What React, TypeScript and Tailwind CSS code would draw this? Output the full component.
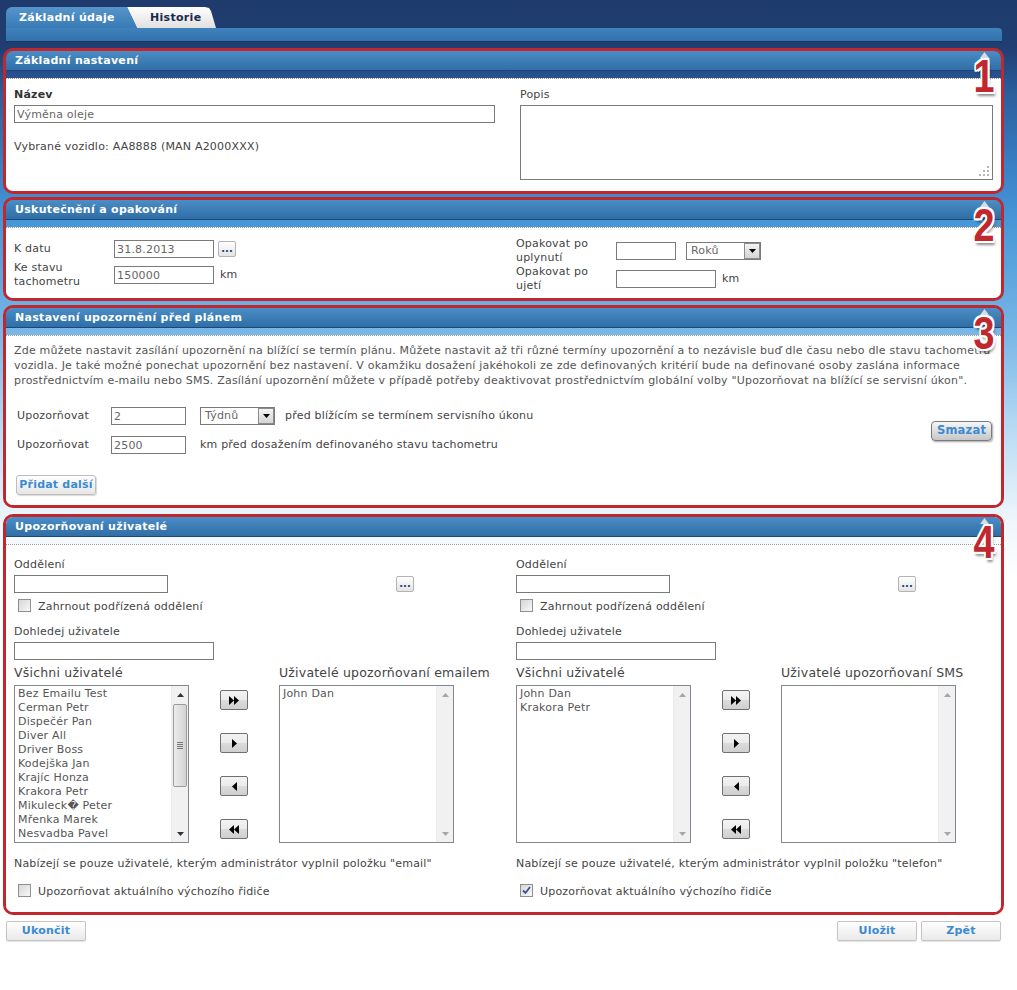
import React from "react";

type Dir = "up" | "down" | "left" | "right";

function Tri({ dir, color = "#000", big = false }: { dir: Dir; color?: string; big?: boolean }) {
  if (dir === "right")
    return big ? (
      <svg width="5" height="9" viewBox="0 0 5 9">
        <path d="M0 0L5 4.5L0 9z" fill={color} />
      </svg>
    ) : (
      <svg width="4" height="7" viewBox="0 0 4 7">
        <path d="M0 0L4 3.5L0 7z" fill={color} />
      </svg>
    );
  if (dir === "left")
    return big ? (
      <svg width="5" height="9" viewBox="0 0 5 9">
        <path d="M5 0L0 4.5L5 9z" fill={color} />
      </svg>
    ) : (
      <svg width="4" height="7" viewBox="0 0 4 7">
        <path d="M4 0L0 3.5L4 7z" fill={color} />
      </svg>
    );
  if (dir === "down")
    return (
      <svg width="7" height="4" viewBox="0 0 7 4">
        <path d="M0 0H7L3.5 4z" fill={color} />
      </svg>
    );
  return (
    <svg width="7" height="4" viewBox="0 0 7 4">
      <path d="M0 4H7L3.5 0z" fill={color} />
    </svg>
  );
}

function Input({ className = "", value = "" }: { className?: string; value?: string }) {
  return (
    <input
      readOnly
      value={value}
      className={`h-[18px] border border-[#7a7a7a] bg-white pl-[2px] text-[11px] text-[#666] outline-none ${className}`}
    />
  );
}

function Select({ value, className = "" }: { value: string; className?: string }) {
  return (
    <div className={`relative flex h-[18px] items-center border border-[#7a7a7a] bg-white pl-[4px] text-[#666] ${className}`}>
      {value}
      <div className="absolute right-0 top-0 flex h-[16px] w-[16px] items-center justify-center border border-[#8c8c8c] bg-[linear-gradient(#f4f4f4,#d4d4d4)]">
        <Tri dir="down" />
      </div>
    </div>
  );
}

function DotsBtn({ className = "" }: { className?: string }) {
  return (
    <div className={`flex h-[16px] w-[18px] items-end justify-center rounded-[2px] border border-[#b3b3b3] bg-[linear-gradient(#ffffff,#e4e4e4)] pb-[3px] text-[10px] font-bold leading-[8px] tracking-normal text-[#1b3f80] ${className}`}>
      ...
    </div>
  );
}

function Btn({ children, className = "" }: { children: React.ReactNode; className?: string }) {
  return (
    <div className={`flex h-[20px] w-[80px] items-center justify-center rounded-[2px] border border-[#c4c4c4] bg-[linear-gradient(#ffffff,#e9e9e9)] text-[11px] font-bold text-[#3b8ad2] shadow-[0_1px_1px_rgba(0,0,0,0.12)] ${className}`}>
      {children}
    </div>
  );
}

function Checkbox({ checked = false }: { checked?: boolean }) {
  return (
    <div className="relative h-[13px] w-[13px] shrink-0 border border-[#8e8f8f] bg-[linear-gradient(135deg,#d6d6d6,#f8f8f8)]">
      {checked && (
        <svg className="absolute left-[1px] top-[1px]" width="9" height="9" viewBox="0 0 9 9">
          <path d="M1 4.5L3.5 7L8 1" stroke="#3b4f93" strokeWidth="1.8" fill="none" />
        </svg>
      )}
    </div>
  );
}

function Section({
  title,
  num,
  className,
  children,
}: {
  title: string;
  num: string;
  className: string;
  children: React.ReactNode;
}) {
  return (
    <div className={`relative flex w-[1001px] flex-col rounded-[10px] border-[3px] border-[#c1282e] ${className}`}>
      <div className="h-[20px] shrink-0 rounded-t-[7px] border-b border-[#1d4776] bg-[linear-gradient(#4b8dc6,#2f6ea7)] pl-[9px] text-[11px] font-bold leading-[19px] tracking-[0.3px] text-white">
        {title}
      </div>
      <div className="h-[7px] shrink-0" />
      <div className="flex-1 rounded-b-[7px] border-t border-dotted border-[#9a9a9a] bg-white">{children}</div>
      <div className="absolute right-[12px] top-[1px]">
        <svg width="9" height="6" viewBox="0 0 9 6">
          <path d="M0 6H9L4.5 0z" fill="#d9dde3" />
        </svg>
      </div>
      <div className="absolute right-[6px] top-[2px] origin-right scale-x-[0.82] font-['Liberation_Sans',sans-serif] text-[46px] font-bold leading-none tracking-normal text-[#c1282e] [text-shadow:-2px_0_0_#fff,2px_0_0_#fff,0_-2px_0_#fff,0_2px_0_#fff,-2px_-2px_0_#fff,2px_-2px_0_#fff,-2px_2px_0_#fff,2px_2px_0_#fff,2px_4px_3px_rgba(0,0,0,0.45)]">
        {num}
      </div>
    </div>
  );
}

function Scrollbar({ active = false }: { active?: boolean }) {
  const c = active ? "#333" : "#a6a6a6";
  return (
    <div className="absolute bottom-0 right-0 top-0 w-[17px] border-l border-[#ececec] bg-[#f1f1f1]">
      <div className="flex h-[17px] items-center justify-center">
        <Tri dir="up" color={c} />
      </div>
      {active && (
        <div className="absolute left-[1px] right-[1px] top-[18px] flex h-[83px] items-center justify-center rounded-[2px] border border-[#9b9b9b] bg-[linear-gradient(to_right,#ececec,#d3d3d3)]">
          <div className="flex w-[6px] flex-col gap-[1px]">
            <div className="h-px bg-[#777]" />
            <div className="h-px bg-[#777]" />
            <div className="h-px bg-[#777]" />
            <div className="h-px bg-[#777]" />
          </div>
        </div>
      )}
      <div className="absolute bottom-0 left-0 right-0 flex h-[17px] items-center justify-center">
        <Tri dir="down" color={c} />
      </div>
    </div>
  );
}

function ListBox({ items, active = false }: { items: string[]; active?: boolean }) {
  return (
    <div className="relative h-[158px] w-[175px] shrink-0 border border-[#828790] bg-white">
      <div className="pl-[3px] pt-[1px] leading-[14px] text-[#555]">
        {items.map((it) => (
          <div key={it}>{it}</div>
        ))}
      </div>
      <Scrollbar active={active} />
    </div>
  );
}

function MoveBtn({ kind }: { kind: "allRight" | "right" | "left" | "allLeft" }) {
  return (
    <div className="flex h-[20px] w-[28px] items-center justify-center rounded-[2px] border border-[#707070] bg-[linear-gradient(#f3f3f3_0%,#ebebeb_50%,#dcdcdc_50%,#cfcfcf_100%)]">
      {kind === "allRight" && (
        <>
          <Tri dir="right" big />
          <Tri dir="right" big />
        </>
      )}
      {kind === "right" && <Tri dir="right" big />}
      {kind === "left" && <Tri dir="left" big />}
      {kind === "allLeft" && (
        <>
          <Tri dir="left" big />
          <Tri dir="left" big />
        </>
      )}
    </div>
  );
}

const allUsers = [
  "Bez Emailu Test",
  "Cerman Petr",
  "Dispečér Pan",
  "Diver All",
  "Driver Boss",
  "Kodejška Jan",
  "Krajíc Honza",
  "Krakora Petr",
  "Mikuleck\uFFFD Peter",
  "Mřenka Marek",
  "Nesvadba Pavel",
];

function UsersCol({
  left,
  leftActive,
  rightTitle,
  right,
  note,
  checked,
}: {
  left: string[];
  leftActive?: boolean;
  rightTitle: string;
  right: string[];
  note: string;
  checked?: boolean;
}) {
  return (
    <div className="w-[502px] shrink-0">
      <div className="leading-[14px]">Oddělení</div>
      <div className="mt-[3px] flex items-center">
        <Input className="w-[154px]" />
        <DotsBtn className="ml-[228px]" />
      </div>
      <div className="mt-[6px] flex items-start pl-[4px]">
        <Checkbox />
        <span className="ml-[7px] mt-px leading-[14px]">Zahrnout podřízená oddělení</span>
      </div>
      <div className="mt-[11px] leading-[14px]">Dohledej uživatele</div>
      <Input className="mt-[3px] block w-[200px]" />
      <div className="mt-[5px] flex text-[12.5px] leading-[16px] text-[#444]">
        <div className="w-[265px]">Všichni uživatelé</div>
        <div>{rightTitle}</div>
      </div>
      <div className="mt-[4px] flex">
        <ListBox items={left} active={leftActive} />
        <div className="ml-[31px] flex flex-col pt-[5px]">
          <MoveBtn kind="allRight" />
          <div className="h-[23px]" />
          <MoveBtn kind="right" />
          <div className="h-[23px]" />
          <MoveBtn kind="left" />
          <div className="h-[23px]" />
          <MoveBtn kind="allLeft" />
        </div>
        <div className="ml-[31px]">
          <ListBox items={right} />
        </div>
      </div>
      <div className="mt-[14px] leading-[14px]">{note}</div>
      <div className="mt-[13px] flex items-start pl-[4px]">
        <Checkbox checked={checked} />
        <span className="ml-[7px] mt-px leading-[14px]">Upozorňovat aktuálního výchozího řidiče</span>
      </div>
    </div>
  );
}

export default function App() {
  return (
    <div className="min-h-[990px] w-[1017px] bg-[linear-gradient(180deg,#1f3b6d_0px,#203e72_48px,#2a5c9b_90px,#3a82c6_170px,#4898d8_225px,#79b7e6_335px,#b9dbf4_430px,#eef6fc_520px,#ffffff_580px)] font-['DejaVu_Sans',sans-serif] text-[11px] tracking-[0.2px] text-[#444]">
      {/* tabs */}
      <div className="h-[48px] pl-[6px] pt-[7px]">
        <div className="relative h-[21px]">
          <div className="absolute left-[121px] top-0 h-[21px] w-[89px] bg-[linear-gradient(#ffffff,#e0e0e0)] [clip-path:polygon(0_0,78px_0,82px_1px,84px_4px,89px_21px,10px_21px)]">
            <span className="absolute left-[23px] top-0 text-[11px] font-bold leading-[21px] tracking-[0.3px] text-[#1b2a4a]">Historie</span>
          </div>
          <div className="absolute left-0 top-0 h-[21px] w-[131px] rounded-tl-[6px] bg-[linear-gradient(#5595cb,#3a7bb6)] [clip-path:polygon(0_0,121px_0,131px_21px,0_21px)]">
            <span className="absolute left-[13px] top-0 text-[11px] font-bold leading-[21px] tracking-[0.3px] text-white">Základní údaje</span>
          </div>
        </div>
        <div className="h-[14px] w-[996px] rounded-tr-[4px] border-b border-[#17375f] bg-[linear-gradient(#3f82bc,#3172ad)]" />
      </div>

      <div className="pl-[3px]">
        <Section title="Základní nastavení" num="1" className="h-[146px]">
          <div className="flex pl-[8px] pt-[9px]">
            <div className="w-[506px]">
              <div className="font-bold leading-[14px] text-[#333]">Název</div>
              <Input className="mt-[3px] block w-[481px]" value="Výměna oleje" />
              <div className="mt-[17px] leading-[14px]">Vybrané vozidlo: AA8888 (MAN A2000XXX)</div>
            </div>
            <div>
              <div className="leading-[14px]">Popis</div>
              <div className="relative mt-[3px] h-[75px] w-[473px] border border-[#7a7a7a] bg-white">
                <svg className="absolute bottom-[2px] right-[2px]" width="11" height="11" viewBox="0 0 11 11">
                  <rect x="8" y="0" width="2" height="2" fill="#b5b5b5" />
                  <rect x="4" y="4" width="2" height="2" fill="#b5b5b5" />
                  <rect x="8" y="4" width="2" height="2" fill="#b5b5b5" />
                  <rect x="0" y="8" width="2" height="2" fill="#b5b5b5" />
                  <rect x="4" y="8" width="2" height="2" fill="#b5b5b5" />
                  <rect x="8" y="8" width="2" height="2" fill="#b5b5b5" />
                </svg>
              </div>
            </div>
          </div>
        </Section>

        <Section title="Uskutečnění a opakování" num="2" className="mt-[3px] h-[104px]">
          <div className="flex pl-[8px]">
            <div className="w-[502px] pt-[12px]">
              <div className="flex h-[18px] items-center">
                <div className="w-[100px] leading-[14px]">K datu</div>
                <Input className="w-[100px]" value="31.8.2013" />
                <DotsBtn className="ml-[4px]" />
              </div>
              <div className="mt-[3px] flex h-[28px] items-center">
                <div className="w-[100px] leading-[14px]">
                  Ke stavu
                  <br />
                  tachometru
                </div>
                <Input className="w-[100px]" value="150000" />
                <span className="ml-[6px]">km</span>
              </div>
            </div>
            <div className="pt-[9px]">
              <div className="flex h-[28px] items-center">
                <div className="w-[100px] leading-[14px]">
                  Opakovat po
                  <br />
                  uplynutí
                </div>
                <Input className="w-[60px]" />
                <Select value="Roků" className="ml-[10px] w-[75px]" />
              </div>
              <div className="flex h-[28px] items-center">
                <div className="w-[100px] leading-[14px]">
                  Opakovat po
                  <br />
                  ujetí
                </div>
                <Input className="w-[100px]" />
                <span className="ml-[6px]">km</span>
              </div>
            </div>
          </div>
        </Section>

        <Section title="Nastavení upozornění před plánem" num="3" className="mt-[4px] h-[203px]">
          <div className="pl-[8px] pt-[7px]">
            <p className="whitespace-nowrap leading-[15px] text-[#555]">
              Zde můžete nastavit zasílání upozornění na blížící se termín plánu. Můžete nastavit až tři různé termíny upozornění a to nezávisle buď dle času nebo dle stavu tachometru
              <br />
              vozidla. Je také možné ponechat upozornění bez nastavení. V okamžiku dosažení jakéhokoli ze zde definovaných kritérií bude na definované osoby zaslána informace
              <br />
              prostřednictvím e-mailu nebo SMS. Zasílání upozornění můžete v případě potřeby deaktivovat prostřednictvím globální volby "Upozorňovat na blížící se servisní úkon".
            </p>
            <div className="mt-[19px] flex items-center">
              <div className="pl-[3px]">
                <div className="flex h-[18px] items-center">
                  <div className="w-[94px]">Upozorňovat</div>
                  <Input className="w-[75px]" value="2" />
                  <Select value="Týdnů" className="ml-[14px] w-[75px]" />
                  <span className="ml-[10px]">před blížícím se termínem servisního úkonu</span>
                </div>
                <div className="mt-[11px] flex h-[18px] items-center">
                  <div className="w-[94px]">Upozorňovat</div>
                  <Input className="w-[75px]" value="2500" />
                  <span className="ml-[14px]">km před dosažením definovaného stavu tachometru</span>
                </div>
              </div>
              <div className="ml-auto mr-[9px] flex h-[20px] w-[61px] items-center justify-center rounded-[4px] border border-[#7b7b7b] bg-[linear-gradient(#f6f6f6,#c6c6c6)] text-[11.5px] font-bold text-[#3b8ad2] shadow-[1px_1px_2px_rgba(0,0,0,0.35)]">
                Smazat
              </div>
            </div>
            <div className="ml-[2px] mt-[21px] flex h-[20px] w-[80px] items-center justify-center rounded-[3px] border border-[#bdbdbd] bg-[linear-gradient(#ffffff,#e6e6e6)] text-[11px] font-bold text-[#3b8ad2] shadow-[1px_1px_1px_rgba(0,0,0,0.15)]">
              Přidat další
            </div>
          </div>
        </Section>

        <Section title="Upozorňovaní uživatelé" num="4" className="mt-[6px] h-[401px]">
          <div className="flex pl-[8px] pt-[13px]">
            <UsersCol
              left={allUsers}
              leftActive
              rightTitle="Uživatelé upozorňovaní emailem"
              right={["John Dan"]}
              note={'Nabízejí se pouze uživatelé, kterým administrátor vyplnil položku "email"'}
            />
            <UsersCol
              left={["John Dan", "Krakora Petr"]}
              rightTitle="Uživatelé upozorňovaní SMS"
              right={[]}
              note={'Nabízejí se pouze uživatelé, kterým administrátor vyplnil položku "telefon"'}
              checked
            />
          </div>
        </Section>
      </div>

      <div className="flex pl-[6px] pr-[16px] pt-[6px]">
        <Btn>Ukončit</Btn>
        <div className="ml-auto flex gap-[4px]">
          <Btn>Uložit</Btn>
          <Btn>Zpět</Btn>
        </div>
      </div>
    </div>
  );
}
